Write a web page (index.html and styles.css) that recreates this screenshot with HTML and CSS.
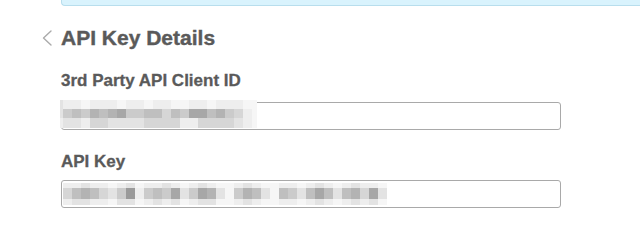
FILE: index.html
```html
<!DOCTYPE html>
<html lang="en">
<head>
<meta charset="utf-8">
<title>API Key Details</title>
<link rel="stylesheet" href="styles.css">
</head>
<body>
<div class="page">
  <div class="alert"></div>
  <div class="header">
    <svg class="back" width="20" height="24" viewBox="0 0 20 24" aria-hidden="true">
      <polyline points="10,5 2.5,12 10,19" fill="none" stroke="#aaaaaa" stroke-width="1.4" stroke-linecap="round" stroke-linejoin="round"/>
    </svg>
    <h1 class="title">API Key Details</h1>
  </div>

  <label class="label label-first">3rd Party API Client ID</label>
  <div class="box box-first">
    <div class="mosaic mosaic-one">
      <div class="row r9"><span class="g2 lead"></span><span class="g1"></span><span class="g1"></span><span class="g0"></span><span class="g1"></span><span class="g1"></span><span class="g1"></span><span class="g0"></span><span class="g1"></span><span class="g1"></span><span class="g0"></span><span class="g1"></span><span class="g1"></span><span class="g0"></span><span class="g0"></span><span class="g1"></span><span class="g1"></span><span class="g0"></span><span class="g1"></span><span class="g1"></span><span class="g1"></span><span class="g0"></span><span class="g0 tail"></span></div>
      <div class="row r9"><span class="g2 lead"></span><span class="g4"></span><span class="g5"></span><span class="g4"></span><span class="g6"></span><span class="g5"></span><span class="g6"></span><span class="g7"></span><span class="g4"></span><span class="g4"></span><span class="g5"></span><span class="g5"></span><span class="g3"></span><span class="g5"></span><span class="g4"></span><span class="g7"></span><span class="g7"></span><span class="g5"></span><span class="g6"></span><span class="g4"></span><span class="g3"></span><span class="g1"></span><span class="g0 tail"></span></div>
      <div class="row r10"><span class="g1 lead"></span><span class="g2"></span><span class="g2"></span><span class="g1"></span><span class="g3"></span><span class="g3"></span><span class="g2"></span><span class="g2"></span><span class="g2"></span><span class="g2"></span><span class="g3"></span><span class="g3"></span><span class="g3"></span><span class="g3"></span><span class="g1"></span><span class="g1"></span><span class="g3"></span><span class="g3"></span><span class="g3"></span><span class="g3"></span><span class="g2"></span><span class="g1"></span><span class="g0 tail"></span></div>
    </div>
  </div>

  <label class="label label-second">API Key</label>
  <div class="box box-second">
    <div class="mosaic mosaic-two">
      <div class="row r5"><span class="g1"></span><span class="g1"></span><span class="g2"></span><span class="g1"></span><span class="g1"></span><span class="g0"></span><span class="g1"></span><span class="g2"></span><span class="g0"></span><span class="g1"></span><span class="g1"></span><span class="g2"></span><span class="g1"></span><span class="g0"></span><span class="g1"></span><span class="g2"></span><span class="g1"></span><span class="g0"></span><span class="g0"></span><span class="g1"></span><span class="g2"></span><span class="g1"></span><span class="g0"></span><span class="g0"></span><span class="g1"></span><span class="g1"></span><span class="g0"></span><span class="g1"></span><span class="g2"></span><span class="g1"></span><span class="g0"></span><span class="g1"></span><span class="g2"></span><span class="g1"></span><span class="g1"></span><span class="g0"></span></div>
      <div class="row r11"><span class="g3"></span><span class="g5"></span><span class="g6"></span><span class="g5"></span><span class="g3"></span><span class="g2"></span><span class="g4"></span><span class="g8"></span><span class="g1"></span><span class="g4"></span><span class="g5"></span><span class="g4"></span><span class="g7"></span><span class="g2"></span><span class="g4"></span><span class="g7"></span><span class="g6"></span><span class="g2"></span><span class="g0"></span><span class="g4"></span><span class="g6"></span><span class="g5"></span><span class="g2"></span><span class="g0"></span><span class="g5"></span><span class="g4"></span><span class="g2"></span><span class="g5"></span><span class="g7"></span><span class="g5"></span><span class="g2"></span><span class="g5"></span><span class="g6"></span><span class="g3"></span><span class="g7"></span><span class="g2"></span></div>
      <div class="row r6"><span class="g1"></span><span class="g2"></span><span class="g2"></span><span class="g1"></span><span class="g1"></span><span class="g0"></span><span class="g2"></span><span class="g2"></span><span class="g0"></span><span class="g1"></span><span class="g2"></span><span class="g1"></span><span class="g2"></span><span class="g0"></span><span class="g1"></span><span class="g2"></span><span class="g2"></span><span class="g0"></span><span class="g0"></span><span class="g1"></span><span class="g2"></span><span class="g1"></span><span class="g0"></span><span class="g0"></span><span class="g1"></span><span class="g1"></span><span class="g0"></span><span class="g1"></span><span class="g2"></span><span class="g1"></span><span class="g0"></span><span class="g1"></span><span class="g2"></span><span class="g1"></span><span class="g2"></span><span class="g0"></span></div>
    </div>
  </div>
</div>
</body>
</html>
```

FILE: styles.css
```css
html, body {
  margin: 0;
  padding: 0;
  background: #ffffff;
}

body {
  font-family: "Liberation Sans", Arial, Helvetica, sans-serif;
  color: #595959;
  overflow: hidden;
}

.page {
  padding-left: 61px;
}

.alert {
  height: 40px;
  margin-top: -36px;
  background: #d9f3fd;
  border: 1px solid #b8deed;
  border-right: none;
  border-radius: 0 0 0 4px;
}

.header {
  display: flex;
  align-items: flex-start;
  margin: 20px 0 0 -20px;
  height: 24px;
}

.back {
  display: block;
  flex: 0 0 20px;
}

.title {
  margin: 0;
  font-size: 21px;
  line-height: 24px;
  font-weight: 700;
  color: #5a5a5a;
  -webkit-text-stroke: 0.4px #5a5a5a;
}

.label {
  display: block;
  font-size: 17px;
  line-height: 20px;
  font-weight: 700;
  color: #5a5a5a;
  -webkit-text-stroke: 0.3px #5a5a5a;
}

.label-first {
  margin-top: 21px;
}

.label-second {
  margin-top: 22px;
}

.box {
  position: relative;
  box-sizing: border-box;
  width: 500px;
  height: 28px;
  border: 1px solid #a9a9a9;
  border-radius: 3px;
  background: #ffffff;
}

.box-first {
  margin-top: 11px;
}

.box-second {
  margin-top: 8px;
}

.mosaic {
  position: absolute;
  display: flex;
  flex-direction: column;
}

.mosaic-one {
  left: -2px;
  top: -3px;
}

.mosaic-two {
  left: 1px;
  top: 2px;
}

.row {
  display: flex;
}

.row span {
  width: 9px;
  flex: 0 0 9px;
}

.row span.lead {
  width: 3px;
  flex-basis: 3px;
}

.row span.tail {
  width: 5px;
  flex-basis: 5px;
}

.r5 { height: 5px; }
.r6 { height: 6px; }
.r9 { height: 9px; }
.r10 { height: 10px; }
.r11 { height: 11px; }

.g0 { background: #f6f6f6; }
.g1 { background: #eeeeee; }
.g2 { background: #e3e3e3; }
.g3 { background: #d6d6d6; }
.g4 { background: #cbcbcb; }
.g5 { background: #bfbfbf; }
.g6 { background: #b3b3b3; }
.g7 { background: #a7a7a7; }
.g8 { background: #9a9a9a; }
```
